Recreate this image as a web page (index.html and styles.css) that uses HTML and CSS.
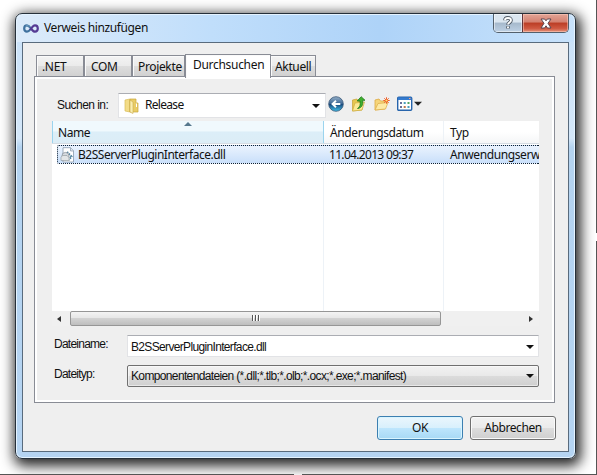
FILE: index.html
```html
<!DOCTYPE html>
<html lang="de">
<head>
<meta charset="utf-8">
<title>Verweis hinzufügen</title>
<link rel="stylesheet" href="styles.css">
</head>
<body>
<div class="page">
  <div class="window">
    <header class="titlebar">
      <svg class="app-icon" width="16" height="9" viewBox="0 0 16 9" fill="none">
        <path d="M8 4.5C6.5 2.3 5.4 1.3 4 1.3C2.2 1.3 1.2 2.7 1.2 4.5S2.2 7.7 4 7.7C5.4 7.7 6.5 6.7 8 4.5" stroke="#3f719e" stroke-width="2.2"/>
        <path d="M7 6C9 3 10.2 1.3 12 1.3C13.8 1.3 14.8 2.7 14.8 4.5S13.8 7.7 12 7.7C10.5 7.7 9.4 6.5 8 4.5" stroke="#563b94" stroke-width="2.2"/>
        <path d="M2.5 2.3C4 .8 5.5 1.6 6.6 2.8" stroke="#79a6ca" stroke-width=".8"/>
      </svg>
      <h1 class="title">Verweis hinzufügen</h1>
      <div class="caption">
        <div class="caption-help">
          <svg width="12" height="14" viewBox="0 0 12 14" fill="none"><path d="M3 4.3C3 1 9 1 9 4.3C9 6.5 6 6.4 6 8.7M6 10.2V12.6" stroke="#4e5762" stroke-width="3.6"/><path d="M3 4.3C3 1.2 9 1.2 9 4.3C9 6.5 6 6.4 6 8.4M6 10.4V12.2" stroke="#fff" stroke-width="1.9"/></svg>
        </div>
        <div class="caption-close">
          <svg width="12" height="11" viewBox="0 0 12 11"><path d="M1 1H4.6L6 2.8L7.4 1H11L8 5.3L11 10H7.4L6 7.8L4.6 10H1L4 5.3Z" fill="#fff" stroke="#5a4650" stroke-width="1"/></svg>
        </div>
      </div>
    </header>
    <main class="client">
      <nav class="tabs">
        <div class="tab tab-net">.NET</div>
        <div class="tab tab-com">COM</div>
        <div class="tab tab-projects">Projekte</div>
        <div class="tab tab-browse">Durchsuchen</div>
        <div class="tab tab-recent">Aktuell</div>
      </nav>
      <section class="panel">
        <div class="lookin">
          <label class="lookin-label">Suchen in:</label>
          <div class="lookin-combo">
            <svg width="15" height="16" viewBox="0 0 15 16"><path d="M1 2L6 1V14L1 13Z" fill="#f3dc87" stroke="#d8bb57" stroke-width=".7"/><path d="M6 1H12V5H14V14H6Z" fill="#e9cc66" stroke="#c9a73e" stroke-width=".7"/><path d="M6 2L9 4V15.5L6 14Z" fill="#faeeb0" stroke="#c9ab4a" stroke-width=".6"/><path d="M12.5 5.5V9" stroke="#fff" stroke-width="1"/></svg>
            <span class="lookin-value">Release</span>
            <i class="arrow"></i>
          </div>
          <div class="tools">
            <svg width="16" height="16" viewBox="0 0 16 16"><defs><linearGradient id="ball" x2="0" y2="1"><stop stop-color="#95b0c8"/><stop offset=".48" stop-color="#3d6795"/><stop offset=".5" stop-color="#164377"/><stop offset="1" stop-color="#43c1ea"/></linearGradient></defs><circle cx="8" cy="8" r="7.3" fill="url(#ball)" stroke="#395777" stroke-width=".8"/><path d="M12.3 8H5M8 4.7L4.5 8L8 11.3" fill="none" stroke="#fff" stroke-width="1.9"/></svg>
            <svg width="16" height="16" viewBox="0 0 16 16"><path d="M1.5 4L6 3L7 5H11V14L1.5 15Z" fill="#e6c750" stroke="#c7a233" stroke-width=".7"/><path d="M1.5 15L4 7L13.5 6L11 14Z" fill="#fbe994" stroke="#cfae42" stroke-width=".7"/><path d="M6.5 12.5C9.2 11 9.5 8.5 9 5H6.2L10.2.7L14 4.3H11.6C12.3 8.5 11 12 6.5 12.5Z" fill="#3eb02e" stroke="#21791c" stroke-width=".8"/></svg>
            <svg width="16" height="16" viewBox="0 0 16 16"><path d="M1 4L5 3L6.5 5H11V13L1 14Z" fill="#f6d57a" stroke="#dda941" stroke-width=".8"/><path d="M1 14L4 7.5L14 6.5L11.5 13Z" fill="#fdeaa5" stroke="#e0b04c" stroke-width=".8"/><path d="M12.5 1.3V7.7M9.3 4.5H15.7M10.3 2.3L14.7 6.7M14.7 2.3L10.3 6.7" stroke="#ef5a2b" stroke-width="1"/><circle cx="12.5" cy="4.5" r="1.1" fill="#ffe46e"/></svg>
            <svg width="25" height="16" viewBox="0 0 25 16"><rect x=".7" y="1.2" width="14" height="13" rx="1" fill="#fff" stroke="#2865ac" stroke-width="1.4"/><path d="M1 2.7H14.5" stroke="#347bd0" stroke-width="2.6"/><path d="M12 2.5H13.5" stroke="#f1a387"/><path d="M3 7H5M3 11H5" stroke="#686f9a" stroke-width="2"/><path d="M6.7 7H8.7M10.5 11H12.5" stroke="#4b9dbd" stroke-width="2"/><path d="M10.5 7H12.5" stroke="#53a460" stroke-width="2"/><path d="M6.7 11H8.7" stroke="#bd774c" stroke-width="2"/><path d="M17 5.7H25L21 9.7Z" fill="#222"/></svg>
          </div>
        </div>
        <div class="list">
          <div class="row head">
            <div class="cell name sorted"><i class="sort"></i><span class="head-name">Name</span></div>
            <div class="cell date"><span class="head-date">Änderungsdatum</span></div>
            <div class="cell type">Typ</div>
          </div>
          <div class="row blank"><div class="name"></div><div class="date"></div><div class="type"></div></div>
          <div class="row file">
            <svg width="15" height="16" viewBox="0 0 15 16"><path d="M3 .7H10.5L13.5 3.7V15H3Z" fill="#fff" stroke="#8899ac" stroke-width=".8"/><path d="M10.5 .7V4H13.5" fill="#dce4ed" stroke="#8899ac" stroke-width=".7"/><path d="M7 5L11.5 9.5L9 13" fill="none" stroke="#4c829f" stroke-width="2" stroke-dasharray="1.5 1"/><circle cx="5.5" cy="9" r="3.6" fill="#d5dadf" stroke="#828a92" stroke-width=".7"/><path d="M1 10.5L2.5 8.5H7L9 10.5V13.5H1Z" fill="#e2e5e7" stroke="#8d9499" stroke-width=".6"/></svg>
            <span class="file-name">B2SServerPluginInterface.dll</span>
            <span class="file-date">11.04.2013 09:37</span>
            <span class="file-type">Anwendungserw</span>
          </div>
          <div class="row rest"><div class="name"></div><div class="date"></div><div class="type"></div></div>
          <div class="scroll">
            <i class="scroll-left"></i>
            <div class="thumb"><i></i><i></i><i></i></div>
            <i class="scroll-right"></i>
          </div>
        </div>
        <div class="field field-name">
          <label class="label-name">Dateiname:</label>
          <div class="edit"><span class="edit-text">B2SServerPluginInterface.dll</span><i class="arrow"></i></div>
        </div>
        <div class="field field-type">
          <label class="label-type">Dateityp:</label>
          <div class="edit select"><span class="select-text">Komponentendateien (*.dll;*.tlb;*.olb;*.ocx;*.exe;*.manifest)</span><i class="arrow"></i></div>
        </div>
      </section>
      <footer class="actions">
        <button class="btn ok">OK</button>
        <button class="btn cancel">Abbrechen</button>
      </footer>
    </main>
  </div>
  <i class="edge edge-right-top"></i>
  <i class="edge edge-right-bottom"></i>
  <i class="edge edge-bottom-left"></i>
  <i class="edge edge-bottom-right"></i>
</div>
</body>
</html>
```

FILE: styles.css
```css
* { box-sizing: border-box; }
body { margin: 0; background: #fff; }
.page {
  position: relative;
  width: 597px;
  height: 475px;
  padding: 13px 21px 16px 15px;
  overflow: hidden;
  font: 12px/16px "Noto Sans", "Open Sans", sans-serif;
  color: #111;
  white-space: nowrap;
}
svg { display: block; flex: none; }
.edge { position: absolute; background: #555; }
.edge-right-top { left: 596px; top: 0; width: 1px; height: 233px; }
.edge-right-bottom { left: 596px; top: 241px; width: 1px; height: 234px; }
.edge-bottom-left { left: 0; top: 474px; width: 294px; height: 1px; }
.edge-bottom-right { left: 302px; top: 474px; width: 295px; height: 1px; }

.window {
  height: 446px;
  padding: 0 6px 6px;
  border: 1px solid #26303a;
  border-radius: 7px;
  background: linear-gradient(90deg, #dcebfa 0, #c0defb 35%, #aed3f8 65%, #c8e2fb 100%) 0 0 / 100% 28px no-repeat, linear-gradient(#c9e1f8 0, #d4e7f9 28%, #b4d3f0 30%, #b5d4f2 100%);
  box-shadow: inset 0 0 0 1px #e5f3ff, 2px 4px 13px 3px rgba(0, 0, 0, .85);
}
.titlebar { display: flex; height: 28px; padding-left: 1px; }
.app-icon { margin-top: 10px; }
.title { margin: 6px 0 0 5px; font-size: 12px; font-weight: 400; line-height: 16px; letter-spacing: -.39px; }
.caption { display: flex; width: 76px; height: 19px; margin-left: auto; border: 1px solid #53606c; border-top: 0; border-radius: 0 0 5px 5px; overflow: hidden; }
.caption-help, .caption-close { display: flex; align-items: center; justify-content: center; }
.caption-help { width: 28px; background: linear-gradient(#dbe6f0 45%, #a6b9cc 50%, #bed1e5); box-shadow: inset 0 0 0 1px rgba(255, 255, 255, .5); }
.caption-close { flex: 1; border-left: 1px solid #62353a; background: linear-gradient(#e3a596, #d48070 45%, #bb3d25 50%, #cf5942 80%, #e4947c); box-shadow: inset 0 0 0 1px rgba(255, 210, 195, .5); }

.client { height: 410px; padding: 11px 13px 0 11px; border: 1px solid #596b7d; background: #efefef; }
.tabs { display: flex; align-items: flex-end; height: 23px; padding-left: 2px; }
.tab {
  height: 21px;
  padding: 3px 0 0 5px;
  margin-bottom: 1px;
  border: 1px solid #898c95;
  border-bottom: 0;
  background: linear-gradient(#f3f3f3, #ebebeb 48%, #dddddd 52%, #d1d1d1);
  box-shadow: inset 1px 1px #fafafa;
  letter-spacing: -.35px;
}
.tab-net { width: 48px; }
.tab-com { width: 48px; padding-left: 6px; }
.tab-projects { width: 53px; }
.tab-browse { position: relative; width: 86px; height: 24px; margin-bottom: -1px; padding: 2px 0 0 7px; background: #fff; letter-spacing: -.3px; }
.tab-recent { width: 45px; padding-left: 4px; border-left: 0; }
.panel {
  height: 327px;
  padding: 16px 14px 0 17px;
  border: 1px solid #898c95;
  box-shadow: inset 2px 2px #fff, inset -2px -2px #fff;
  margin-top: -1px;
}
.lookin { display: flex; height: 25px; margin-top: 0; }
.lookin-label { width: 66px; padding: 4px 0 0 5px; font: 12px/16px "Liberation Sans", sans-serif; letter-spacing: -.55px; }
.lookin-combo { display: flex; align-items: center; width: 208px; height: 25px; padding: 0 5px 0 5px; border: 1px solid #e2e3e6; border-top-color: #abadb3; background: #fff; }
.lookin-value { margin: -2px 0 0 6px; letter-spacing: -.7px; }
.arrow { width: 0; border: 4px solid transparent; border-top-color: #111; border-bottom: 0; margin-left: auto; }
.tools { display: flex; gap: 7px; padding: 3px 0 0 2px; }

.list { width: 487px; height: 205px; margin-top: 3px; background: #fff; overflow: hidden; }
.row { display: flex; }
.head { height: 23px; background: linear-gradient(#fff 50%, #f5f6f7); border-bottom: 1px solid #d5dce3; letter-spacing: -.4px; }
.cell { position: relative; padding: 4px 0 0 6px; border-right: 1px solid #e0e7ee; }
.name { flex: none; width: 272px; border-right: 1px solid #edf2f7; }
.date { flex: none; width: 120px; border-right: 1px solid #edf2f7; }
.cell.type { flex: 1; border: 0; }
.sorted { padding-left: 5px; border: 1px solid #9bd4ee; border-top: 0; border-bottom: 0; background: linear-gradient(#f0f9fd 45%, #dceef8 50%, #dcedf6); }
.sort { position: absolute; left: 131px; top: 1px; border: 4px solid transparent; border-top: 0; border-bottom-color: #56788d; }
.blank { height: 1px; }
.file {
  height: 19px;
  width: 482px;
  margin-left: 5px;
  padding: 1px 0 0 2px;
  border: 1px dotted #123;
  border-right: 0;
  border-radius: 2px 0 0 2px;
  background: linear-gradient(#eaf3fe, #c9dffa);
}
.file-name { flex: none; width: 251px; margin-left: 3px; letter-spacing: -.48px; }
.file-date { flex: none; width: 121px; letter-spacing: -.68px; }
.file-type { letter-spacing: -.4px; }
.rest { height: 147px; }
.scroll { display: flex; align-items: center; height: 15px; background: #f0f0f0; }
.scroll-left { margin-left: 5px; border: 3px solid transparent; border-right: 4px solid #333; border-left: 0; }
.thumb { display: flex; align-items: center; justify-content: center; gap: 1px; width: 371px; height: 15px; margin-left: 9px; border: 1px solid #969696; border-radius: 2px; background: linear-gradient(#f4f4f4, #e7e7e7 45%, #d2d2d2 50%, #bebebe); }
.thumb i { width: 2px; height: 6px; margin-top: -2px; background: linear-gradient(90deg, #555 50%, #fff 50%); }
.scroll-right { margin-left: auto; margin-right: 6px; border: 3px solid transparent; border-left: 4px solid #333; border-right: 0; }

.field { display: flex; font: 12px/16px "Liberation Sans", sans-serif; }
.field-name { margin-top: 9px; }
.field-type { margin-top: 8px; }
.field label { width: 75px; padding: 1px 0 0 2px; letter-spacing: -.75px; }
.edit { display: flex; align-items: center; width: 412px; height: 22px; padding: 2px 4px 0 3px; border: 1px solid #e2e3e6; border-top-color: #abadb3; background: #fff; }
.edit .arrow { margin-top: -1px; }
.select { padding-top: 0; border: 1px solid #707070; border-radius: 2px; background: linear-gradient(#f2f2f2, #e9e9e9 48%, #dbdbdb 52%, #cfcfcf); box-shadow: inset 0 0 0 1px rgba(255, 255, 255, .5); }
.edit-text { letter-spacing: -.66px; }
.select-text { letter-spacing: -.64px; }

.actions { display: flex; justify-content: flex-end; gap: 7px; margin: 13px -1px 0 0; }
.btn { width: 86px; height: 24px; padding: 0; border: 1px solid #707070; border-radius: 3px; font: 12px/18px "Noto Sans", sans-serif; letter-spacing: -.4px; color: #111; background: linear-gradient(#f2f2f2, #ebebeb 48%, #dddddd 50%, #cfcfcf); box-shadow: inset 0 0 0 1px #fafafa; }
.ok { border-color: #3c7fb1; background: linear-gradient(#eaf6fd, #d9f0fc 48%, #bee6fd 50%, #a7d9f5); box-shadow: inset 0 0 0 1px #d9f5ff; }
```
